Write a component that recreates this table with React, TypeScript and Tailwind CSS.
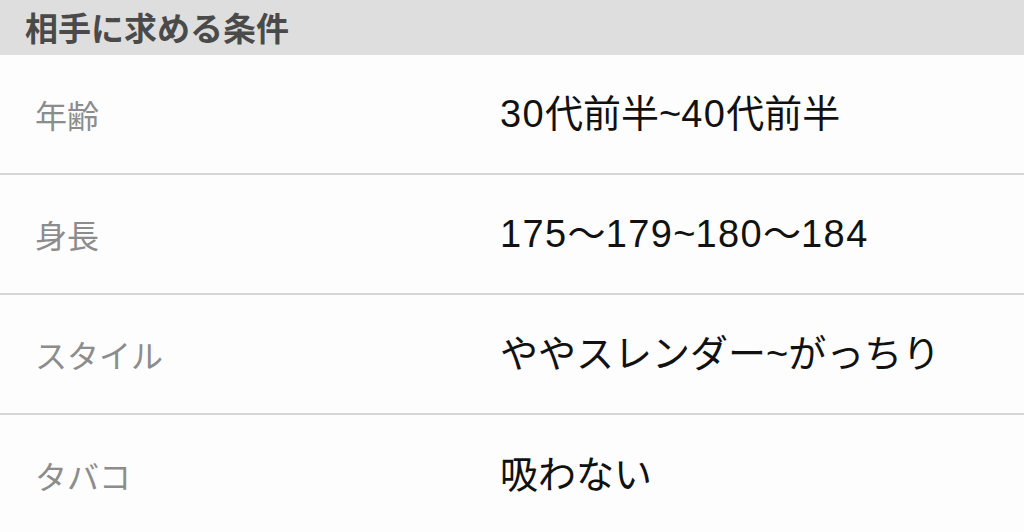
import React from "react";

const rows = [
  { label: "年齢", value: "30代前半~40代前半" },
  { label: "身長", value: "175〜179~180〜184" },
  { label: "スタイル", value: "ややスレンダー~がっちり" },
  { label: "タバコ", value: "吸わない" },
];

function Value({ text }: { text: string }) {
  const parts = text.split(/(\d+)/).filter((p) => p.length > 0);
  return (
    <>
      {parts.map((p, i) =>
        /^\d+$/.test(p) ? (
          <span key={i} className="tracking-[1.4px]">
            {p}
          </span>
        ) : (
          <span key={i}>{p}</span>
        )
      )}
    </>
  );
}

export default function App() {
  return (
    <div
      className="w-[1024px] h-[532px] overflow-hidden bg-[#fdfdfd]"
      style={{ fontFamily: '"Noto Sans CJK JP", "Noto Sans", sans-serif' }}
    >
      <div className="h-[55px] bg-[#dedede] flex items-center pl-[25px]">
        <span className="text-[33px] font-bold text-[#4a4a4a] leading-none">相手に求める条件</span>
      </div>
      {rows.map((r, i) => (
        <div
          key={i}
          className={`h-[120px] flex items-center ${i < rows.length - 1 ? "border-b-2 border-[#d6d6d6]" : ""}`}
        >
          <div className="w-[500px] pl-[35px] text-[32px] text-[#8c8c8c] leading-none">{r.label}</div>
          <div
            className="text-[38px] text-[#111111] leading-none"
            style={{ fontFamily: '"Liberation Sans", "Noto Sans CJK JP", sans-serif' }}
          >
            <Value text={r.value} />
          </div>
        </div>
      ))}
    </div>
  );
}
